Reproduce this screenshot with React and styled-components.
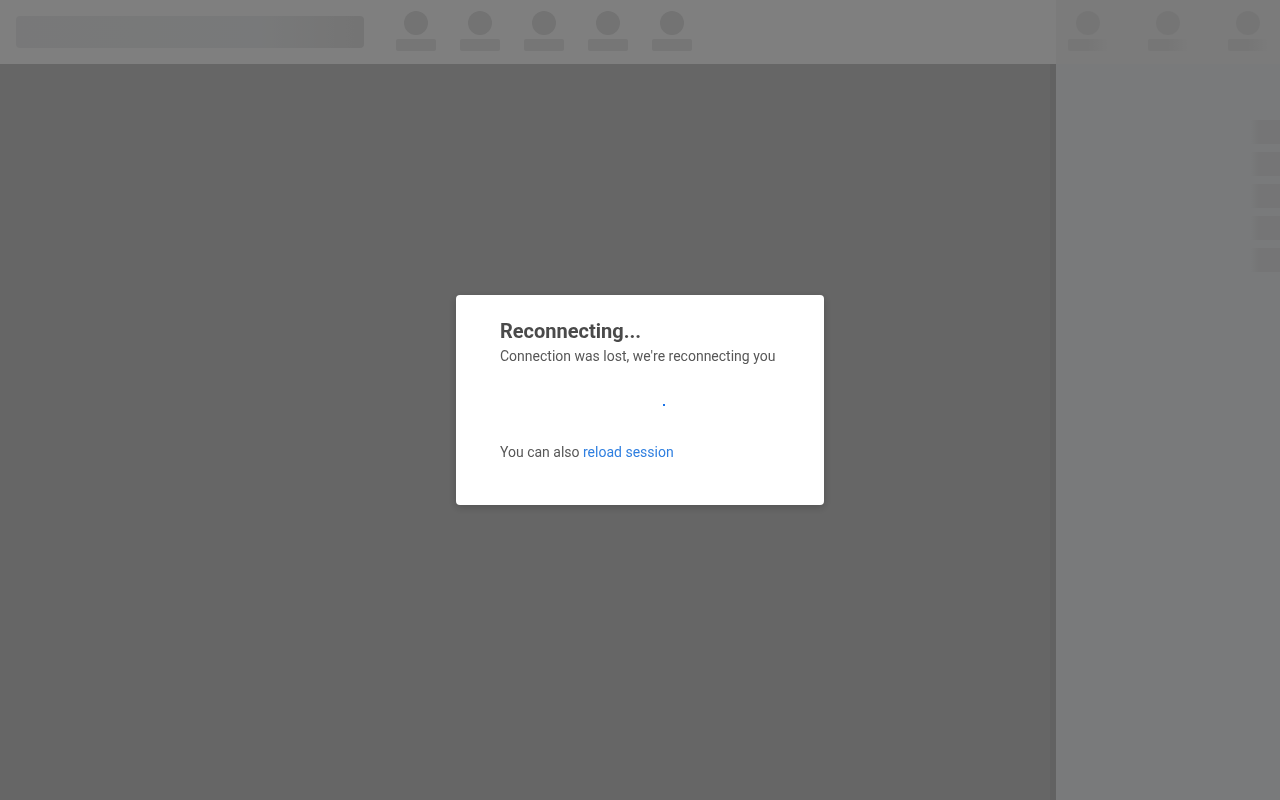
import React from 'react';
import styled, { createGlobalStyle } from 'styled-components';

const colors = {
  page: '#cccccc',
  bar: '#ffffff',
  sideBar: '#f6f6f6',
  side: '#f3f5f7',
  bone: '#e6e6e6',
  boneLight: '#ececec',
  boneFaint: '#ededed',
  text: '#4a4a4a',
  textSoft: '#575757',
  link: '#2f7fe0',
};

const GlobalStyle = createGlobalStyle`
  html, body, #root { margin: 0; height: 100%; }
  body {
    font-family: Roboto, "Liberation Sans", Arial, sans-serif;
    background: ${colors.page};
    overflow: hidden;
  }
`;

const Layout = styled.div`
  display: flex;
  width: 100vw;
  height: 100vh;
`;

const Main = styled.div`
  flex: 1;
  display: flex;
  flex-direction: column;
  min-width: 0;
`;

const TopBar = styled.div`
  height: 64px;
  background: ${colors.bar};
  display: flex;
  align-items: flex-start;
  padding-left: 16px;
  box-sizing: border-box;
`;

const SearchBone = styled.div`
  width: 348px;
  height: 32px;
  margin-top: 16px;
  border-radius: 4px;
  background: linear-gradient(90deg, #f0f1f2 0%, #f1f3f4 70%, #ebebeb 92%, #e8e8e8 100%);
`;

const ToolGroup = styled.div`
  display: flex;
  gap: ${({ $gap }) => $gap}px;
  margin-left: ${({ $offset }) => $offset}px;
  padding-top: 11px;
`;

const ToolItem = styled.div`
  width: 40px;
  display: flex;
  flex-direction: column;
  align-items: center;
  gap: 4px;
`;

const Circle = styled.div`
  width: 24px;
  height: 24px;
  border-radius: 50%;
  background: ${({ $faint }) => ($faint ? '#ebebeb' : colors.bone)};
`;

const Label = styled.div`
  width: 40px;
  height: 12px;
  border-radius: 2px;
  background: ${({ $faint }) =>
    $faint
      ? `linear-gradient(90deg, #ececec 0%, #ececec 45%, ${colors.sideBar} 100%)`
      : colors.boneLight};
`;

const Canvas = styled.div`
  flex: 1;
  background: ${colors.page};
`;

const Side = styled.div`
  width: 224px;
  display: flex;
  flex-direction: column;
  background: ${colors.side};
`;

const SideHeader = styled.div`
  height: 64px;
  background: ${colors.sideBar};
  padding-left: 12px;
  box-sizing: border-box;
  overflow: hidden;
`;

const SideList = styled.div`
  flex: 1;
  display: flex;
  flex-direction: column;
  align-items: flex-end;
  gap: 8px;
  padding-top: 56px;
  box-shadow: -6px 0 0 rgba(0, 0, 0, 0.03);
`;

const SideRow = styled.div`
  width: 30px;
  height: 24px;
  background: linear-gradient(90deg, ${colors.side} 0%, #eaebec 30%, #eaebec 100%);
`;

const Overlay = styled.div`
  position: fixed;
  inset: 0;
  background: rgba(0, 0, 0, 0.5);
  display: flex;
  align-items: center;
  justify-content: center;
`;

const Dialog = styled.div`
  width: 368px;
  box-sizing: border-box;
  padding: 24px 44px 43px;
  background: #fff;
  border-radius: 4px;
  box-shadow: 0 2px 8px rgba(0, 0, 0, 0.2);
`;

const Title = styled.h2`
  margin: 0;
  font-size: 20px;
  line-height: 24px;
  font-weight: 700;
  color: ${colors.text};
`;

const Subtitle = styled.p`
  margin: 3px 0 0;
  font-size: 14px;
  line-height: 20px;
  color: ${colors.textSoft};
`;

const SpinnerBox = styled.div`
  height: 76px;
  display: flex;
  align-items: center;
  justify-content: center;
`;

const Hint = styled.p`
  margin: 0;
  font-size: 14px;
  line-height: 20px;
  color: ${colors.textSoft};
`;

const Link = styled.a`
  color: ${colors.link};
  text-decoration: none;
  cursor: pointer;
`;

const tools = [1, 2, 3, 4, 5];
const sideTools = [1, 2, 3];
const sideRows = [1, 2, 3, 4, 5];

const Tool = ({ faint }) => (
  <ToolItem>
    <Circle $faint={faint} />
    <Label $faint={faint} />
  </ToolItem>
);

const Spinner = () => (
  <svg width="64" height="76" viewBox="0 0 64 76">
    <rect x="55" y="38" width="2" height="2" fill="#1a73e8" />
  </svg>
);

const App = () => (
  <>
    <GlobalStyle />
    <Layout>
      <Main>
        <TopBar>
          <SearchBone />
          <ToolGroup $gap={24} $offset={32}>
            {tools.map(t => <Tool key={t} />)}
          </ToolGroup>
        </TopBar>
        <Canvas />
      </Main>
      <Side>
        <SideHeader>
          <ToolGroup $gap={40} $offset={0}>
            {sideTools.map(t => <Tool key={t} faint />)}
          </ToolGroup>
        </SideHeader>
        <SideList>
          {sideRows.map(r => <SideRow key={r} />)}
        </SideList>
      </Side>
    </Layout>
    <Overlay>
      <Dialog>
        <Title>Reconnecting...</Title>
        <Subtitle>Connection was lost, we're reconnecting you</Subtitle>
        <SpinnerBox>
          <Spinner />
        </SpinnerBox>
        <Hint>
          You can also <Link>reload session</Link>
        </Hint>
      </Dialog>
    </Overlay>
  </>
);

export default App;
